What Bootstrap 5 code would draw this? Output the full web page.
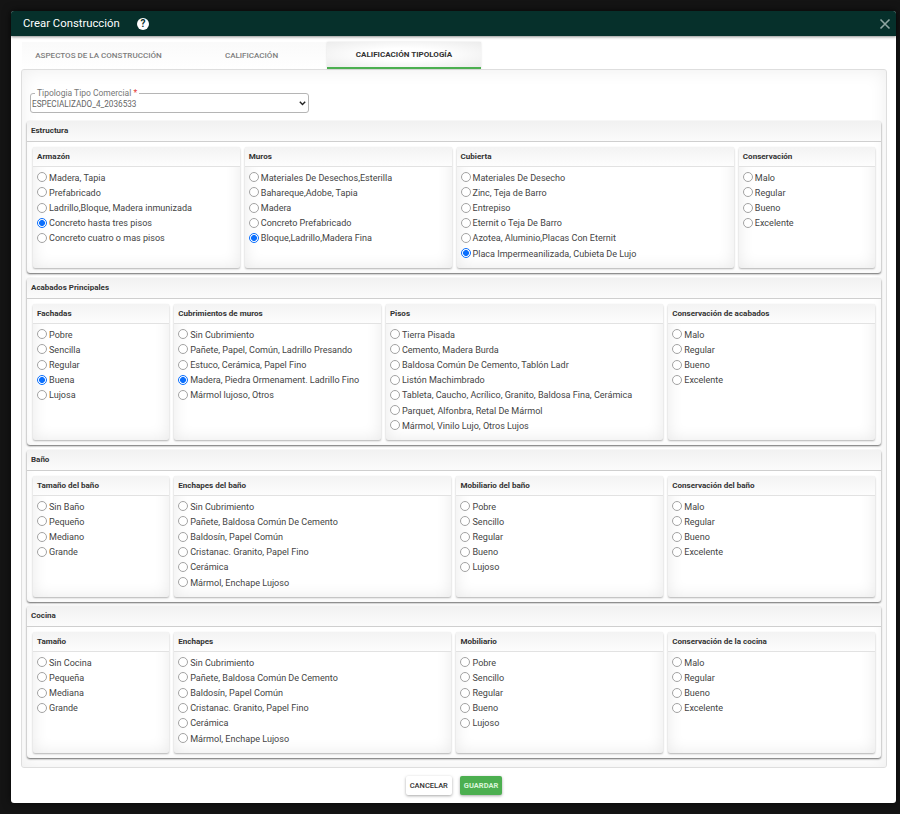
<!DOCTYPE html>
<html lang="es"><head><meta charset="utf-8"><title>Crear Construcción</title>
<link href="https://cdn.jsdelivr.net/npm/bootstrap@5.3.0/dist/css/bootstrap.min.css" rel="stylesheet">
<style>
html,body{height:100%;background:#141414;overflow:hidden}
body{font-family:Roboto,"Liberation Sans",sans-serif;color:#333;padding:11px 4px 0 11px}
.dlg{background:#fff;height:792px;border-radius:3px;box-shadow:0 0 8px rgba(0,0,0,.6);display:flex;flex-direction:column}
.dlg-head{height:25px;background:#06302b;color:#fff;padding:0 5px 0 12px;border-radius:3px 3px 0 0;box-shadow:0 1px 3px rgba(0,0,0,.45);flex:none}
.dlg-title{font-size:11.3px;line-height:25px;width:114px}
.help-dot{width:12px;height:12px;border-radius:50%;background:#fff;color:#06302b;font-size:10px;font-weight:700;line-height:12px;text-align:center}
.dlg-x{background:none;border:0;padding:0;width:12px;height:12px;line-height:0}
.dlg-body{padding:6px 9px 0 10px;flex:1}
.tabbar{height:27px;flex-wrap:nowrap;margin-left:1px}
.tabbtn{width:153px;padding:0;border:0;background:linear-gradient(#fafafa,#fff);font-size:8.05px;font-weight:500;color:#7d7d7d;line-height:25px;height:27px;text-align:center;white-space:nowrap}
.tabbtn.on{width:154px;margin-left:-1px;color:#333;font-weight:700;background:radial-gradient(ellipse at center,#fff 35%,#ececec 100%);border-bottom:2px solid #4caf50;box-shadow:0 0 2px rgba(0,0,0,.12)}
.tabpane{height:699px;border:1px solid #dedede;border-radius:3px;padding:23px 5px 0;box-shadow:inset 0 0 18px rgba(0,0,0,.07)}
.selbox{width:279px;height:20px;margin:0 0 8px 3px;padding:0;border:1px solid #b5b5b5;border-radius:3px;position:relative;background:#fff}
.sel-label{position:absolute;left:4px;top:-6px;padding:0 2px;font-size:8.5px;line-height:11px;color:#777;background:#fff;margin:0}
.sel-label b{color:#e53935;font-weight:400}
.selbox select{display:block;width:100%;height:18px;border:0;background-color:transparent;background-image:none;font-family:inherit;font-size:8.2px;color:#666;padding:3px 18px 0 1px;box-shadow:none}
.chev{position:absolute;right:2px;top:7px;pointer-events:none}
.sect{width:854px;border-radius:3px;margin-bottom:5px;box-shadow:0 1px 2px rgba(0,0,0,.6),inset 0 0 10px rgba(0,0,0,.05);border:0;background:#fff;--bs-card-bg:#fff}
.sect:nth-child(n+3){margin-bottom:4px}
.sect-head{height:21px;line-height:20px;padding:0 4px;font-size:8px;font-weight:700;color:#333;background:linear-gradient(#f1f1f1,#fbfbfb);border-bottom:1px solid #cfcfcf;border-radius:3px 3px 0 0}
.sect-body{padding:5px 6px 5px}
.grid5{--bs-gutter-x:5px;--bs-gutter-y:0;margin-left:-2.5px;margin-right:-2.5px}
.tile{height:100%;border:0;border-radius:2px;box-shadow:0 1px 2px rgba(0,0,0,.3),inset 0 0 16px rgba(0,0,0,.09);background:#fff}
.h121{height:121px}.h136{height:136px}
.tile-head{height:20px;line-height:19px;padding:0 4px;font-size:8.05px;font-weight:700;color:#333;border-bottom:1px solid #e2e2e2;background:linear-gradient(#f3f3f3,#fdfdfd)}
.tile-body{padding:3.6px 4px 0}
.opt{height:15.2px;margin:0;padding:0;display:flex;align-items:center;min-height:0;font-size:9.05px;line-height:15.2px;color:#444;white-space:nowrap}
.opt .form-check-input{float:none;flex:none;width:10px;height:10px;margin:-2px 2px 0 0;border:1px solid #a3a3a3;background-color:#fff}
.opt .form-check-input:checked{background:radial-gradient(circle,#0b6ffd 0,#0b6ffd 2.7px,#fff 3.2px);border-color:#0b6ffd;box-shadow:none}
.opt label{margin:0}
.acts{height:35px}
.bt{font-family:inherit;font-size:7.5px;font-weight:500;height:19px;padding:0 4px;line-height:19px;border:0;border-radius:2px;box-shadow:0 1px 3px rgba(0,0,0,.35)}
.bt-c{background:#fff;color:#333}
.bt-g{background:#4caf50;color:#d9f5da;font-weight:700}
</style></head><body>
<div class="dlg" role="dialog">
<div class="dlg-head d-flex align-items-center">
<div class="dlg-title">Crear Construcción</div><div class="help-dot">?</div>
<button class="dlg-x ms-auto" aria-label="Cerrar"><svg width="12" height="12" viewBox="0 0 12 12"><path d="M1.5 1.5l9 9M10.5 1.5l-9 9" stroke="#8fa5a1" stroke-width="1.6" fill="none"/></svg></button>
</div>
<div class="dlg-body">
<div class="nav tabbar"><button class="tabbtn">ASPECTOS DE LA CONSTRUCCIÓN</button><button class="tabbtn">CALIFICACIÓN</button><button class="tabbtn on">CALIFICACIÓN TIPOLOGÍA</button></div>
<div class="tabpane">
<div class="selbox"><label class="sel-label" for="tip">Tipologia Tipo Comercial <b>*</b></label>
<select class="form-select" id="tip"><option>ESPECIALIZADO_4_2036533</option></select>
<svg class="chev" width="7" height="5" viewBox="0 0 7 5"><path d="M.8.8l2.7 2.7L6.2.8" stroke="#222" stroke-width="1.4" fill="none"/></svg></div>
<div id="sects"></div>
</div>
<div class="acts d-flex justify-content-center align-items-center gap-2"><button class="bt bt-c">CANCELAR</button><button class="bt bt-g">GUARDAR</button></div>
</div>
</div>
<script>
var M=["Malo","Regular","Bueno","Excelente"],L=["Pobre","Sencillo","Regular","Bueno","Lujoso"];
var E=["Sin Cubrimiento","Pañete, Baldosa Común De Cemento","Baldosín, Papel Común","Cristanac. Granito, Papel Fino","Cerámica","Mármol, Enchape Lujoso"];
var D=[
["Estructura","h121",[
[3,"Armazón",["Madera, Tapia","Prefabricado","Ladrillo,Bloque, Madera inmunizada","Concreto hasta tres pisos","Concreto cuatro o mas pisos"],3],
[3,"Muros",["Materiales De Desechos,Esterilla","Bahareque,Adobe, Tapia","Madera","Concreto Prefabricado","Bloque,Ladrillo,Madera Fina"],4],
[4,"Cubierta",["Materiales De Desecho","Zinc, Teja de Barro","Entrepiso","Eternit o Teja De Barro","Azotea, Aluminio,Placas Con Eternit","Placa Impermeanilizada, Cubieta De Lujo"],5],
[2,"Conservación",M,-1]]],
["Acabados Principales","h136",[
[2,"Fachadas",["Pobre","Sencilla","Regular","Buena","Lujosa"],3],
[3,"Cubrimientos de muros",["Sin Cubrimiento","Pañete, Papel, Común, Ladrillo Presando","Estuco, Cerámica, Papel Fino","Madera, Piedra Ormenament. Ladrillo Fino","Mármol lujoso, Otros"],3],
[4,"Pisos",["Tierra Pisada","Cemento, Madera Burda","Baldosa Común De Cemento, Tablón Ladr","Listón Machimbrado","Tableta, Caucho, Acrílico, Granito, Baldosa Fina, Cerámica","Parquet, Alfonbra, Retal De Mármol","Mármol, Vinilo Lujo, Otros Lujos"],-1],
[3,"Conservación de acabados",M,-1]]],
["Baño","h121",[
[2,"Tamaño del baño",["Sin Baño","Pequeño","Mediano","Grande"],-1],
[4,"Enchapes del baño",E,-1],
[3,"Mobiliario del baño",L,-1],
[3,"Conservación del baño",M,-1]]],
["Cocina","h121",[
[2,"Tamaño",["Sin Cocina","Pequeña","Mediana","Grande"],-1],
[4,"Enchapes",E,-1],
[3,"Mobiliario",L,-1],
[3,"Conservación de la cocina",M,-1]]]];
var h="",n=0;
D.forEach(function(s){
h+='<section class="card sect"><div class="sect-head">'+s[0]+'</div><div class="sect-body"><div class="row grid5 '+s[1]+'">';
s[2].forEach(function(c){n++;
h+='<div class="col-'+c[0]+'"><div class="card tile"><div class="tile-head">'+c[1]+'</div><div class="tile-body">';
c[2].forEach(function(o,i){var id="r"+n+"_"+i;
h+='<div class="form-check opt"><input class="form-check-input" type="radio" name="g'+n+'" id="'+id+'"'+(i==c[3]?' checked':'')+'><label for="'+id+'">'+o+'</label></div>';});
h+='</div></div></div>';});
h+='</div></div></section>';});
document.getElementById("sects").innerHTML=h;
</script>
<script src="https://cdn.jsdelivr.net/npm/bootstrap@5.3.0/dist/js/bootstrap.bundle.min.js"></script>
</body></html>
